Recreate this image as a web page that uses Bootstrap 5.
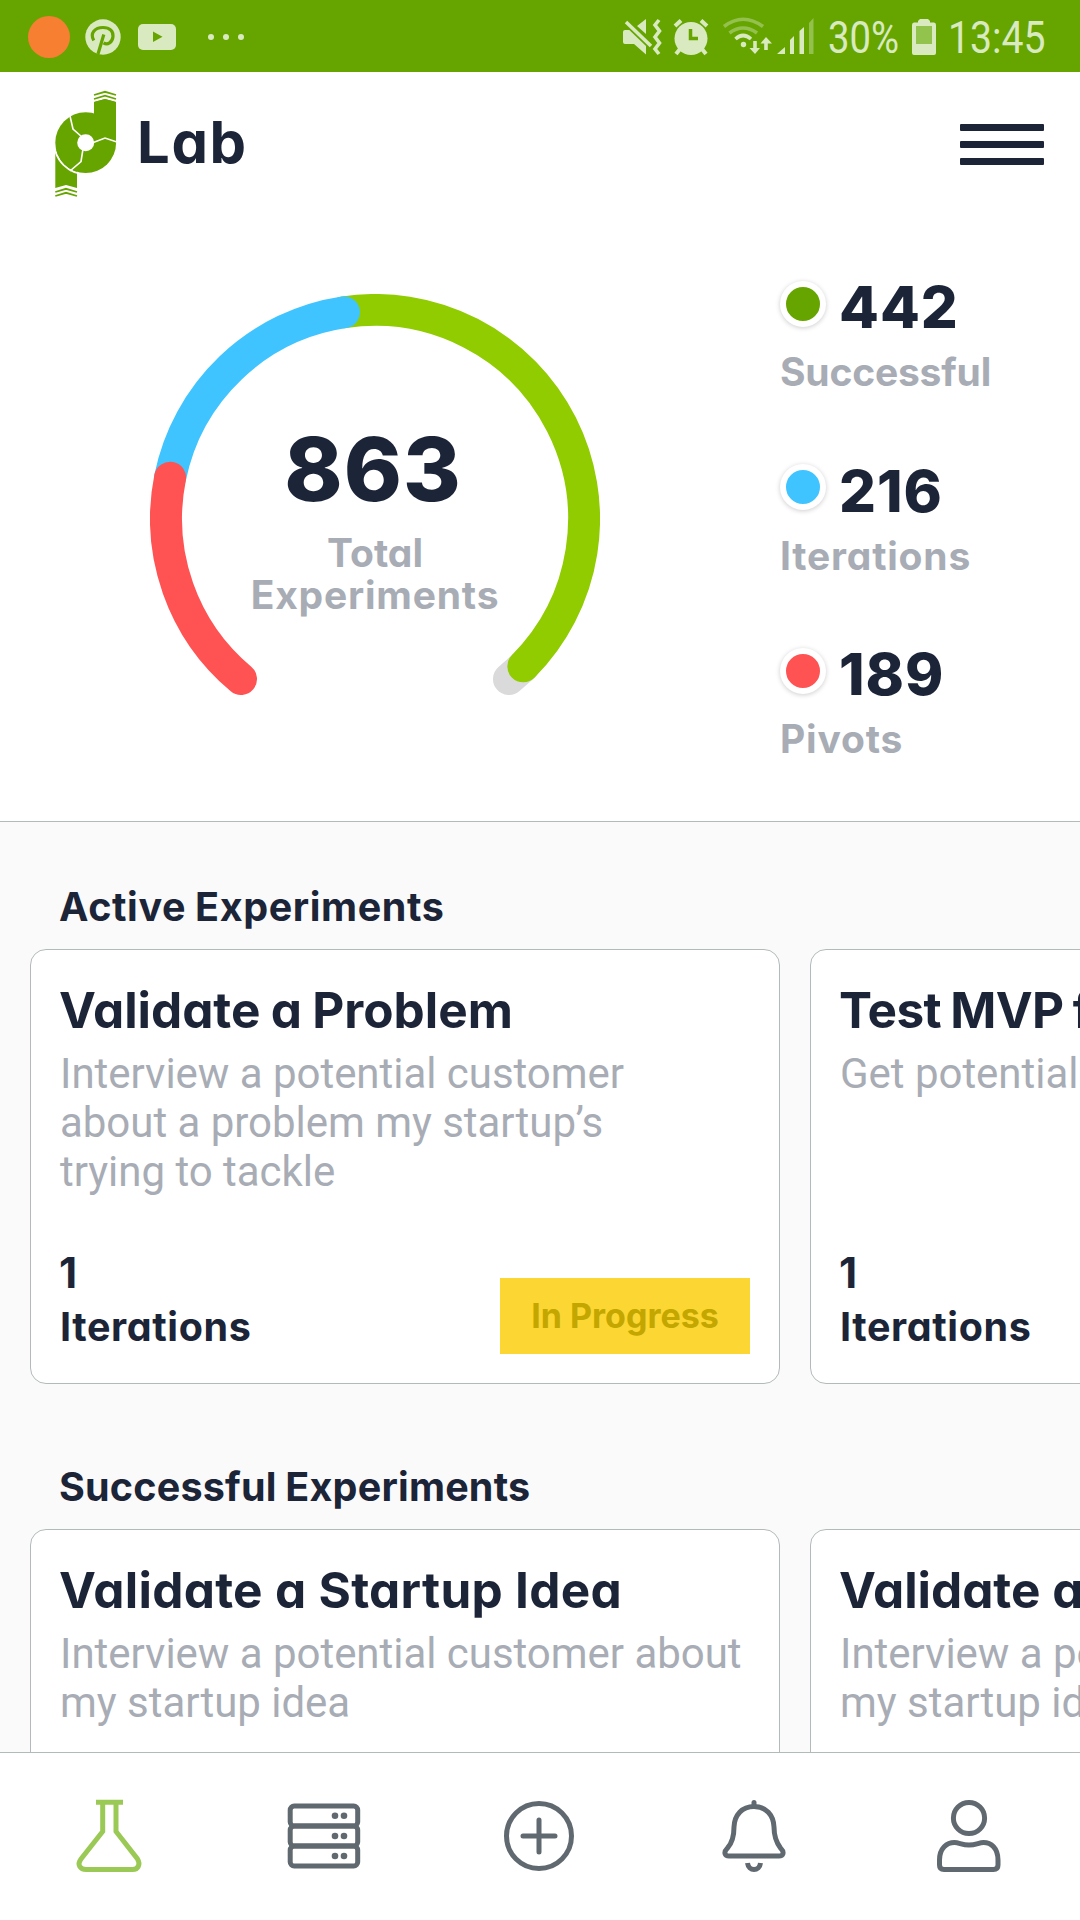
<!DOCTYPE html>
<html lang="en">
<head>
<meta charset="utf-8">
<meta name="viewport" content="width=device-width, initial-scale=1">
<title>Lab</title>
<link rel="stylesheet" href="https://cdn.jsdelivr.net/npm/bootstrap@5.3.0/dist/css/bootstrap.min.css">
<style>
:root{--ink:#1c2438;--mute:#a8acb5;--line:#b3baba;--leaf:#66a500;--tint:#d9eac0}
body{font-family:Inter,"Liberation Sans",sans-serif;font-feature-settings:"cv11" 1;color:var(--ink);background:#fff;height:1920px;overflow:hidden;font-weight:700;line-height:1}
svg{display:block;flex:none}
.status{height:72px;background:var(--leaf);padding:0 35px 0 28px}
.status svg{fill:var(--tint)}
.status-text{font:400 45px Roboto,sans-serif;color:var(--tint);line-height:72px;transform-origin:0 50%;transform:scaleX(.85);white-space:nowrap;padding-top:4px}
.pct{width:71px;margin-left:14px}
.clock{width:97px;margin-left:11px;transform:scaleX(.87)}
.battery{margin-left:12px}
.top{height:144px;padding:0 36px 0 55px}
.brand{font-size:58px;margin:-5px 0 0 20px;letter-spacing:1.6px}
.burger{width:84px;display:flex;flex-direction:column;gap:10px;padding:0;border:0;background:none;margin-top:0}
.burger i{height:7px;background:var(--ink);border-radius:1px}
.hero{height:606px;border-bottom:1px solid var(--line);padding:78px 0 0 150px}
.gauge{width:450px;height:404px;display:grid}
.gauge>*{grid-area:1/1}
.gauge-copy{padding-top:131px;text-align:center}
.total{font-size:88px;line-height:88px;text-indent:-4px;font-weight:800;letter-spacing:1px}
.total-label{font-size:39px;line-height:42px;color:var(--mute)}
.legend-list{margin:-24px 0 0 180px}
.legend-item{height:183.5px}
.legend-row{height:74px}
.dot{width:46px;height:46px;border:6.5px solid #fff;border-radius:50%;box-shadow:0 1px 5px rgba(0,0,0,.2);margin-top:-7px}
.count{font-size:58px;margin-left:13px;font-weight:800;letter-spacing:1px}
.count-label{font-size:39px;line-height:56px;color:var(--mute)}
.wide{letter-spacing:.8px}
.tight{letter-spacing:-.2px}
.feed{height:930px;background:#fafafa;overflow:hidden}
.section-title{font-size:39.5px;line-height:48px;margin:0 0 18px 59px;font-weight:700;white-space:nowrap;letter-spacing:.2px;word-spacing:-1px}
.section-title.wide{letter-spacing:.6px}
.shelf{padding-left:30px;gap:30px;margin-bottom:79px}
.exp{width:750px;height:435px;flex:none;border:1px solid var(--line);border-radius:16px;background:#fff;padding:30px 29px 28px}
.exp-title{font-size:49.5px;line-height:60px;margin:0 0 0 -1px;font-weight:700;white-space:nowrap}
.exp-text{font:400 42px/49px Roboto,sans-serif;color:var(--mute);margin:9px 0 0;height:147px;letter-spacing:-.03px}
.num{font-size:42px;line-height:48px;margin:0 0 2px -1px}
.iter{font-size:39.5px;line-height:56px;letter-spacing:.6px}
.state{width:250px;height:76px;background:#fcd632;color:#c3a600;font-size:34px;margin-bottom:1px}
.tabs{height:168px;border-top:1px solid var(--line);padding:46px 3.5px 0 1.5px;background:#fff}
.tabs svg{margin:0 auto;fill:none;stroke:#616970;stroke-width:5}
</style>
<script src="https://cdn.jsdelivr.net/npm/bootstrap@5.3.0/dist/js/bootstrap.bundle.min.js"></script>
</head>
<body>
<div class="status d-flex align-items-center">
  <svg width="220" height="72" viewBox="28 0 220 72">
    <circle cx="49" cy="37" r="21" fill="#f77f32"/>
    <circle cx="103" cy="37" r="17.7"/>
    <path d="M93.800 40.500C89.500 33 95 27.500 103 27.500C110 27.500 113.500 31.500 113 36.500C112.400 42.500 107.500 45.500 103.500 42.800M103.800 34.500L98 54" fill="none" stroke="#66a500" stroke-width="3.200"/>
    <rect x="138" y="24" width="38" height="26" rx="5"/>
    <path d="M153 31.500V42L162.500 36.700Z" fill="#66a500"/>
    <circle cx="211" cy="37" r="3"/><circle cx="226" cy="37" r="3"/><circle cx="241" cy="37" r="3"/>
  </svg>
  <svg class="ms-auto" width="192" height="72" viewBox="622 0 192 72">
    <path d="M625 30H632L646 44V54.500L634 44H625Q623 44 623 42V32Q623 30 625 30ZM637 26L646 19V34Z"/>
    <path d="M626 22L651 46" stroke="#66a500" stroke-width="7"/>
    <path d="M626 22L651 46" stroke="#d9eac0" stroke-width="3.500"/>
    <path d="M659 20L655 25L659.500 31L655 37L659.500 43L655 49L659 54" fill="none" stroke="#d9eac0" stroke-width="3.600"/>
    <circle cx="691" cy="38.500" r="16.500"/>
    <path d="M675 26L681 20.500M707 26L701 20.500M680 49L676 54M702 49L706 54" stroke="#d9eac0" stroke-width="4"/>
    <path d="M690.500 29V38.500H698" fill="none" stroke="#66a500" stroke-width="3.500"/>
    <g fill="none" stroke="#d9eac0" stroke-width="3.600"><path opacity=".4" d="M724 26.500Q743 12 763 26.500M729.500 33Q743 23 757 33"/><path d="M735.500 39Q743 32 751 39"/></g>
    <circle cx="743.500" cy="44.500" r="2.700"/>
    <path d="M753.200 41H756.800V48H760L755 54L749.500 48H753.200ZM764.200 50H767.800V43.500H772L766 37L760.500 43.500H764.200Z"/>
    <path d="M777 54L785 47V54ZM790 40L794 36V54H790ZM799.500 31L804 27V54H799.500Z"/><path opacity=".4" d="M809 23L813.500 18V54H809Z"/>
  </svg>
  <span class="status-text pct">30%</span>
  <svg class="battery" width="26" height="72" viewBox="910 0 26 72"><path d="M911 25Q911 22.500 913 22.500H917V21L919 19H927L929 21V22.500H933Q935 22.500 935 25V53Q935 55 933 55H913Q911 55 911 53Z"/><path d="M915 26H931V44H915Z" fill="#92c34d"/></svg>
  <span class="status-text clock">13:45</span>
</div>

<header class="top d-flex align-items-center">
  <svg width="62" height="108" viewBox="55 90 62 108">
    <g fill="#66a500">
      <path d="M94 102L105 99L116 102V143H94Z"/>
      <path d="M55.300 150H77V188L66 185L55.300 188Z"/>
      <circle cx="85.700" cy="142.700" r="31.300" fill="none" stroke="#fff" stroke-width="2"/>
      <circle cx="85.700" cy="142.700" r="30.400"/>
      <path d="M94 102L105 99L116 102V143H94Z"/>
    </g>
    <g fill="none" stroke="#66a500" stroke-width="1.800"><path d="M94 95L105 91.800L116 95M94 99L105 95.700L116 99M55.300 192L66 188.800L77 192M55.300 196L66 192.800L77 196"/></g>
    <g fill="none" stroke="#fff" stroke-width="1.600"><path d="M70 116L73 129L82 137M92 143L105 138L117 142M83 149L81 161.500L70 171"/></g>
    <circle cx="85.700" cy="142.700" r="8.500" fill="#fff"/>
  </svg>
  <div class="brand">Lab</div>
  <button class="burger ms-auto" aria-label="Menu"><i></i><i></i><i></i></button>
</header>

<section class="hero d-flex">
  <div class="gauge">
    <svg width="450" height="404" viewBox="150 294 450 404" fill="none" stroke-width="32" stroke-linecap="round">
      <path stroke="#dadada" d="M523.300 666.500L509 679"/>
      <path stroke="#90cc00" d="M344 312.300A209 209 0 0 1 523.300 666.300"/>
      <path stroke="#3fc4ff" d="M170.100 477.700A209 209 0 0 1 344 312.300"/>
      <path stroke="#ff5353" d="M241 679A209 209 0 0 1 170.100 477.700"/>
    </svg>
    <div class="gauge-copy">
      <div class="total">863</div>
      <div class="total-label" style="margin-top:19px">Total</div>
      <div class="total-label wide">Experiments</div>
    </div>
  </div>
  <div class="legend-list">
    <div class="legend-item"><div class="legend-row d-flex align-items-center"><span class="dot" style="background:#66a500"></span><span class="count">442</span></div><div class="count-label tight">Successful</div></div>
    <div class="legend-item"><div class="legend-row d-flex align-items-center"><span class="dot" style="background:#3fc4ff"></span><span class="count">216</span></div><div class="count-label wide">Iterations</div></div>
    <div class="legend-item"><div class="legend-row d-flex align-items-center"><span class="dot" style="background:#ff5353"></span><span class="count">189</span></div><div class="count-label wide">Pivots</div></div>
  </div>
</section>

<main class="feed">
  <h2 class="section-title wide" style="padding-top:61px">Active Experiments</h2>
  <div class="shelf d-flex">
    <article class="exp d-flex flex-column">
      <h3 class="exp-title" style="word-spacing:-1.500px">Validate a Problem</h3>
      <p class="exp-text">Interview a potential customer<br>about a problem my startup’s<br>trying to tackle</p>
      <div class="d-flex justify-content-between align-items-end mt-auto">
        <div><div class="num">1</div><div class="iter">Iterations</div></div>
        <div class="state d-flex align-items-center justify-content-center">In Progress</div>
      </div>
    </article>
    <article class="exp d-flex flex-column">
      <h3 class="exp-title" style="word-spacing:-2px;letter-spacing:-.6px">Test MVP for</h3>
      <p class="exp-text text-nowrap">Get potential customers</p>
      <div class="mt-auto"><div class="num">1</div><div class="iter">Iterations</div></div>
    </article>
  </div>
  <h2 class="section-title">Successful Experiments</h2>
  <div class="shelf d-flex">
    <article class="exp">
      <h3 class="exp-title" style="letter-spacing:.3px">Validate a Startup Idea</h3>
      <p class="exp-text text-nowrap">Interview a potential customer about<br>my startup idea</p>
    </article>
    <article class="exp">
      <h3 class="exp-title">Validate a Startup</h3>
      <p class="exp-text text-nowrap">Interview a potential customer about<br>my startup idea</p>
    </article>
  </div>
</main>

<nav class="tabs d-flex align-items-start">
  <svg width="74" height="74" viewBox="71.500 1799 74 74" style="stroke:#9bc955"><path d="M95.500 1802.200H122.500M102.200 1802V1831.500L80.500 1859C76 1865 80 1869.500 85.500 1869.500H132C138 1869.500 140 1864 137 1859L115.500 1831.500V1802"/></svg>
  <svg width="74" height="74" viewBox="287 1799 74 74"><rect x="290.200" y="1806" width="67.500" height="20" rx="4"/><rect x="290.200" y="1826" width="67.500" height="20" rx="4"/><rect x="290.200" y="1846" width="67.500" height="20" rx="4"/><g fill="#616970" stroke="none"><circle cx="335" cy="1815.700" r="3.300"/><circle cx="344" cy="1815.700" r="3.300"/><circle cx="335" cy="1836" r="3.300"/><circle cx="344" cy="1836" r="3.300"/><circle cx="335" cy="1856" r="3.300"/><circle cx="344" cy="1856" r="3.300"/></g></svg>
  <svg width="74" height="74" viewBox="502 1799 74 74"><circle cx="539" cy="1836" r="32.500"/><path d="M523 1836H555M539 1820V1852" stroke-linecap="round"/></svg>
  <svg width="74" height="74" viewBox="717 1799 74 74"><path stroke-linecap="round" d="M754 1802.500V1806"/><path d="M754 1806.500C742 1806.500 734.500 1815 734 1827C734 1835 733 1842 727.500 1848C723 1852.500 725 1856 729 1856H779C783 1856 785 1852.500 780.500 1848C776 1842 774 1835 774 1827C773.500 1815 766 1806.500 754 1806.500ZM747.500 1863C748.500 1871.500 759.500 1871.500 760.500 1863"/></svg>
  <svg width="74" height="74" viewBox="932 1799 74 74"><circle cx="969" cy="1818" r="15.600"/><path d="M939.500 1865V1860C939.500 1848 947 1842.500 954.500 1842.500C959 1842.500 962 1845 969 1845C976 1845 979 1842.500 983.500 1842.500C991 1842.500 998 1848 998 1860V1865Q998 1869.500 993.500 1869.500H944Q939.500 1869.500 939.500 1865Z"/></svg>
</nav>
</body>
</html>
